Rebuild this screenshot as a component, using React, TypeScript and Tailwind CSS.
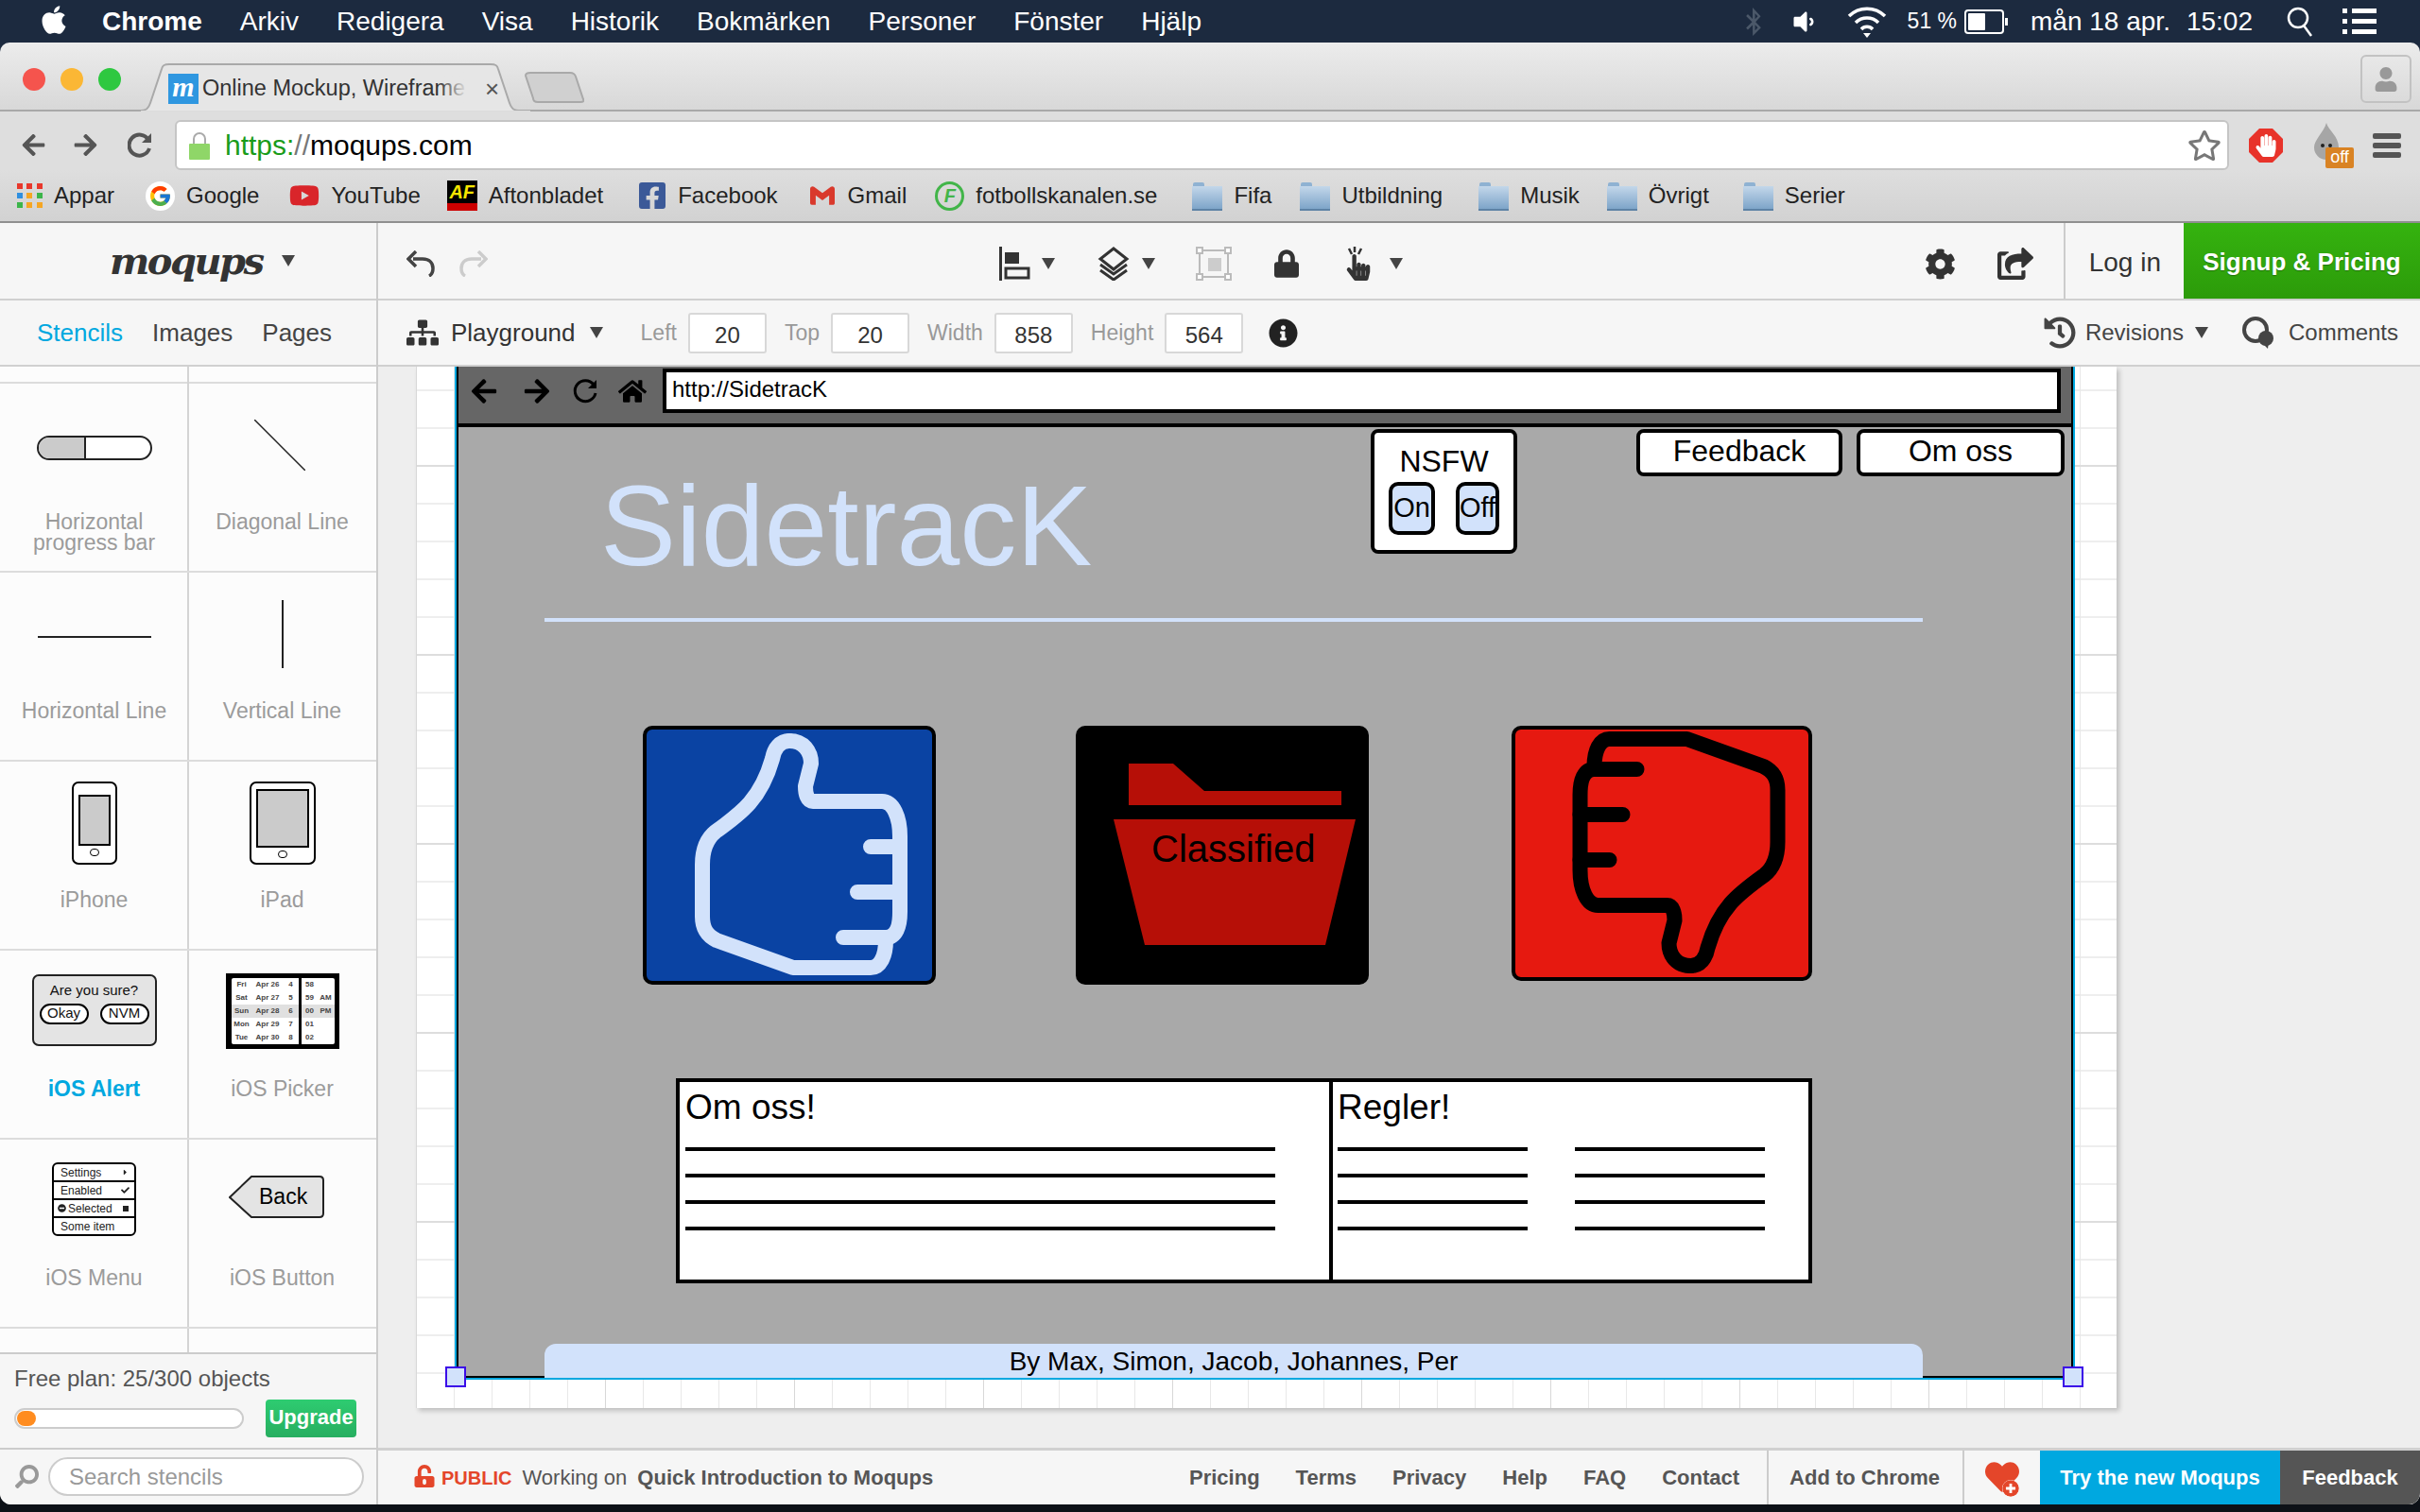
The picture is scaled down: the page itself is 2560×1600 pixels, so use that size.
import { FaApple, FaBluetoothB, FaCog, FaFacebookSquare, FaHeart, FaHistory, FaHome, FaInfoCircle, FaLock, FaRegStar, FaSearch, FaShareSquare, FaSitemap, FaYoutube, FaArrowLeft, FaArrowRight, FaUnlockAlt, FaHandPaper, FaHandPointer, FaUser, FaPlusCircle, FaVolumeDown, FaCheck, FaCaretRight, FaMinusCircle } from "react-icons/fa"
import { FcGoogle } from "react-icons/fc"
import { SiGmail } from "react-icons/si"

const menuItems = ["Arkiv", "Redigera", "Visa", "Historik", "Bokmärken", "Personer", "Fönster", "Hjälp"]
const footerLinks = ["Pricing", "Terms", "Privacy", "Help", "FAQ", "Contact"]
const pickerRows = [
    ["Fri", "Apr 26", "4", "58", ""],
    ["Sat", "Apr 27", "5", "59", "AM"],
    ["Sun", "Apr 28", "6", "00", "PM"],
    ["Mon", "Apr 29", "7", "01", ""],
    ["Tue", "Apr 30", "8", "02", ""],
]

function Caret({ className = "" }: { className?: string }) {
    return (
        <svg viewBox="0 0 14 12" className={`w-[14px] h-[12px] shrink-0 ${className}`}>
            <path d="M0 0h14L7 12z" fill="#444" />
        </svg>
    )
}

function MenuBar() {
    return (
        <div className="h-[45px] shrink-0 bg-[#1c2a3f] flex items-center text-white text-[28px] pl-[42px] pr-[46px]">
            <FaApple className="w-[30px] h-[34px] mb-1" />
            <span className="font-bold ml-[36px]">Chrome</span>
            <div className="flex gap-[40px] ml-[40px]">
                {menuItems.map((item) => <span key={item}>{item}</span>)}
            </div>
            <div className="flex-1" />
            <FaBluetoothB className="w-[20px] h-[30px] text-[#4b5869]" />
            <FaVolumeDown className="w-[26px] h-[28px] ml-[30px]" />
            <svg viewBox="0 0 42 36" className="w-[42px] h-[36px] ml-[33px]" fill="none" stroke="white" strokeWidth="3.5">
                <path d="M2 12a27 27 0 0 1 38 0" />
                <path d="M9 19a17 17 0 0 1 24 0" />
                <path d="M15 26a8 8 0 0 1 12 0" />
                <path d="M21 35l-4-5h8z" fill="white" stroke="none" />
            </svg>
            <span className="text-[23px] ml-[22px]">51 %</span>
            <div className="w-[42px] h-[26px] border-2 border-white rounded-[4px] ml-[8px] p-[2px]">
                <div className="w-[18px] h-full bg-white rounded-[1px]" />
            </div>
            <div className="w-[3px] h-[8px] bg-white mr-[24px] ml-[1px]" />
            <span>mån 18 apr.</span>
            <span className="ml-[17px]">15:02</span>
            <svg viewBox="0 0 28 32" className="w-[28px] h-[32px] ml-[36px]" fill="none" stroke="white" strokeWidth="2.5">
                <circle cx="12" cy="12" r="10" />
                <path d="M18 20l8 11" />
            </svg>
            <div className="ml-[31px] w-[36px] flex flex-col gap-[6px]">
                {[0, 1, 2].map((i) => (
                    <div key={i} className="flex gap-[5px]">
                        <div className="w-[5px] h-[5px] bg-white" />
                        <div className="flex-1 h-[5px] bg-white" />
                    </div>
                ))}
            </div>
        </div>
    )
}

function TabStrip() {
    return (
        <div className="h-[73px] shrink-0 rounded-t-[10px] bg-gradient-to-b from-[#ececec] to-[#d8d8d8] border-b-2 border-[#a9a9a9] flex items-end">
            <div className="flex gap-[16px] ml-[24px] mb-[20px]">
                <div className="w-[24px] h-[24px] rounded-full bg-[#f5544d]" />
                <div className="w-[24px] h-[24px] rounded-full bg-[#fbb735]" />
                <div className="w-[24px] h-[24px] rounded-full bg-[#2ec840]" />
            </div>
            <div className="relative ml-[19px] w-[416px] h-[51px] -mb-[2px] flex items-center pl-[31px] pt-[2px]">
                <svg viewBox="0 0 416 51" className="absolute inset-0 w-full h-full">
                    <path d="M0 50c8 0 10-2 12-8l12-36c1-4 3-5 8-5h340c5 0 7 1 8 5l12 36c2 6 4 8 12 8" fill="#e6e6e6" stroke="#a9a9a9" strokeWidth="2" />
                    <path d="M2 50h412v1H2z" fill="#dcdcdc" />
                </svg>
                <div className="relative w-[32px] h-[32px] bg-[#2f97e0] text-white italic font-bold font-['Liberation_Serif',serif] text-[30px] leading-[28px] text-center">m</div>
                <div className="relative ml-[4px] w-[280px] whitespace-nowrap text-[23.5px] text-[#333]">
                    Online Mockup, Wireframe
                    <div className="absolute right-0 inset-y-0 w-[30px] bg-gradient-to-r from-transparent to-[#e6e6e6]" />
                </div>
                <span className="relative ml-[19px] text-[#555] text-[26px] leading-none">×</span>
            </div>
            <svg viewBox="0 0 63 33" className="w-[63px] h-[33px] -ml-[8px] mb-[7px]">
                <path d="M6 1h42c3 0 5 1 6 4l8 24c1 2 0 3-3 3H14c-3 0-5-1-5-4L1 4c0-2 2-3 5-3z" fill="#d0d0d0" stroke="#a9a9a9" strokeWidth="2" />
            </svg>
            <div className="flex-1" />
            <div className="w-[54px] h-[51px] mb-[7px] mr-[9px] border-2 border-[#c2c2c2] rounded-[6px] flex items-center justify-center">
                <FaUser className="w-[24px] h-[26px] text-[#999]" />
            </div>
        </div>
    )
}

function AddressRow() {
    return (
        <div className="h-[62px] shrink-0 bg-[#dedede] flex items-center pl-[20px] pr-[20px] pt-[9px]">
            <FaArrowLeft className="w-[31px] h-[27px] text-[#555]" />
            <FaArrowRight className="w-[31px] h-[27px] text-[#555] ml-[24px]" />
            <svg viewBox="0 0 26 28" className="w-[26px] h-[28px] ml-[29px]" fill="none" stroke="#555" strokeWidth="4">
                <path d="M22 8a11 11 0 1 0 1 9" />
                <path d="M25 1v10H15z" fill="#555" stroke="none" />
            </svg>
            <div className="ml-[24px] w-[2174px] h-[53px] bg-white border-2 border-[#c5c5c5] rounded-[6px] flex items-center pl-[13px] pr-[6px]">
                <svg viewBox="0 0 22 30" className="w-[22px] h-[30px]">
                    <path d="M5 14V8a6 6 0 0 1 12 0v6" fill="none" stroke="#aaa" strokeWidth="2" />
                    <rect x="0" y="13" width="22" height="17" rx="1" fill="#8fd668" />
                </svg>
                <span className="text-[30px] ml-[16px] text-[#1a9c1a]">https:</span>
                <span className="text-[30px] text-[#777]">//</span>
                <span className="text-[30px] text-black">moqups.com</span>
                <div className="flex-1" />
                <FaRegStar className="w-[36px] h-[34px] text-[#777]" />
            </div>
            <div className="relative w-[36px] h-[36px] ml-[21px]">
                <svg viewBox="0 0 36 36" className="w-[36px] h-[36px]">
                    <path d="M11 0h14l11 11v14L25 36H11L0 25V11z" fill="#e8332a" />
                </svg>
                <FaHandPaper className="absolute left-[7px] top-[6px] w-[22px] h-[24px] text-white" />
            </div>
            <div className="relative w-[44px] h-[48px] ml-[31px]">
                <svg viewBox="0 0 30 40" className="w-[30px] h-[40px]">
                    <path d="M15 0c2 8 13 14 13 26a13 13 0 0 1-26 0C2 18 12 10 15 0z" fill="#a6a6a6" />
                    <circle cx="11" cy="24" r="2" fill="#222" />
                    <circle cx="19" cy="24" r="2" fill="#222" />
                </svg>
                <div className="absolute right-0 bottom-0 w-[30px] h-[22px] bg-[#d98324] rounded-[2px] text-white text-[18px] leading-[20px] text-center">off</div>
            </div>
            <div className="ml-[20px] w-[30px] flex flex-col gap-[4px]">
                <div className="h-[6px] rounded-[2px] bg-[#555]" />
                <div className="h-[6px] rounded-[2px] bg-[#555]" />
                <div className="h-[6px] rounded-[2px] bg-[#555]" />
            </div>
        </div>
    )
}

function AppsIcon() {
    const colors = ["#e8382c", "#e8382c", "#e8382c", "#2f8fe0", "#f5a623", "#3cb54a", "#3cb54a", "#f5a623", "#f5a623"]
    return (
        <div className="grid grid-cols-3 gap-[4px] w-[27px]">
            {colors.map((c, i) => <div key={i} className="w-[6px] h-[6px]" style={{ backgroundColor: c }} />)}
        </div>
    )
}

function FolderIcon() {
    return (
        <div className="relative w-[32px] h-[30px] mt-[2px]">
            <div className="absolute top-0 left-[1px] w-[12px] h-[6px] bg-[#8fb2d2] rounded-t-[2px]" />
            <div className="absolute top-[4px] inset-x-0 bottom-0 bg-gradient-to-b from-[#c3d7ea] to-[#7ea5c9] border-b-2 border-[#5d82a5]" />
        </div>
    )
}

function Bookmark({ icon, label, gap = "ml-[33px]" }: { icon: React.ReactNode; label: string; gap?: string }) {
    return (
        <div className={`flex items-center gap-[12px] ${gap}`}>
            {icon}
            <span className="text-[24px] text-[#222] whitespace-nowrap">{label}</span>
        </div>
    )
}

function BookmarkBar() {
    return (
        <div className="h-[56px] shrink-0 bg-gradient-to-b from-[#dedede] to-[#d2d2d2] border-b-2 border-[#8f8f8f] flex items-center pl-[18px]">
            <Bookmark gap="" icon={<AppsIcon />} label="Appar" />
            <Bookmark icon={<div className="w-[31px] h-[31px] rounded-full bg-white flex items-center justify-center"><FcGoogle className="w-[25px] h-[25px]" /></div>} label="Google" />
            <Bookmark gap="ml-[32px]" icon={<FaYoutube className="w-[32px] h-[30px] text-[#d9252a]" />} label="YouTube" />
            <Bookmark gap="ml-[28px]" icon={
                <div className="w-[32px] h-[32px] flex flex-col">
                    <div className="h-[24px] bg-black text-[#f6e600] font-bold italic text-[20px] leading-[24px] text-center overflow-hidden">AF</div>
                    <div className="h-[8px] bg-[#cc0000]" />
                </div>
            } label="Aftonbladet" />
            <Bookmark gap="ml-[37px]" icon={<FaFacebookSquare className="w-[30px] h-[32px] text-[#3b5998]" />} label="Facebook" />
            <Bookmark gap="ml-[32px]" icon={<SiGmail className="w-[30px] h-[26px] text-[#d9392c]" />} label="Gmail" />
            <Bookmark gap="ml-[30px]" icon={
                <div className="w-[31px] h-[31px] rounded-full border-[3px] border-[#42b549] text-[#42b549] font-bold italic text-[20px] leading-[24px] text-center">F</div>
            } label="fotbollskanalen.se" />
            <Bookmark gap="ml-[37px]" icon={<FolderIcon />} label="Fifa" />
            <Bookmark gap="ml-[30px]" icon={<FolderIcon />} label="Utbildning" />
            <Bookmark gap="ml-[38px]" icon={<FolderIcon />} label="Musik" />
            <Bookmark gap="ml-[29px]" icon={<FolderIcon />} label="Övrigt" />
            <Bookmark gap="ml-[36px]" icon={<FolderIcon />} label="Serier" />
        </div>
    )
}

function Stencil({ icon, label, active = false }: { icon?: React.ReactNode; label?: string; active?: boolean }) {
    return (
        <div className="h-[200px] border-b-2 border-[#dcdcdc] flex flex-col items-center">
            <div className="h-[135px] w-full flex items-center justify-center">{icon}</div>
            <div className={`text-[23px] leading-[22px] text-center ${active ? "text-[#00a8e0] font-bold" : "text-[#9b9b9b]"}`}>{label}</div>
        </div>
    )
}

function Device({ w, h, screenH, top }: { w: string; h: string; screenH: string; top: string }) {
    return (
        <div className={`${w} ${h} border-2 border-black rounded-[7px] bg-white flex flex-col items-center ${top}`}>
            <div className={`${screenH} w-[calc(100%-10px)] border-2 border-black bg-[#cbcbcb]`} />
            <div className="w-[10px] h-[8px] mt-[3px] rounded-full border border-black" />
        </div>
    )
}

function Picker() {
    return (
        <div className="w-[120px] h-[80px] bg-black p-[5px] pl-[6px]">
            <div className="bg-white rounded-[2px] h-full flex flex-col text-[8px] leading-none text-[#444] font-bold whitespace-nowrap">
                {pickerRows.map((row, i) => (
                    <div key={row[0]} className={`flex-1 flex items-center ${i === 2 ? "bg-[#e0e0e0]" : ""}`}>
                        <span className="w-[22px] text-center">{row[0]}</span>
                        <span className="w-[33px] text-center">{row[1]}</span>
                        <span className="w-[16px] text-center">{row[2]}</span>
                        <span className="w-[3px] h-full bg-black" />
                        <span className="w-[18px] text-center">{row[3]}</span>
                        <span className="w-[16px] text-center">{row[4]}</span>
                    </div>
                ))}
            </div>
        </div>
    )
}

function StencilMenu() {
    return (
        <div className="w-[89px] h-[78px] border-2 border-black rounded-[6px] bg-white flex flex-col text-[12px] leading-none text-[#222]">
            <div className="flex-1 flex items-center pl-[7px] pr-[5px] justify-between border-b-2 border-black">Settings<FaCaretRight className="w-[9px] h-[9px]" /></div>
            <div className="flex-1 flex items-center pl-[7px] pr-[5px] justify-between border-b-2 border-black">Enabled<FaCheck className="w-[9px] h-[9px]" /></div>
            <div className="flex-1 flex items-center pl-[4px] pr-[6px] border-b-2 border-black gap-[2px]"><FaMinusCircle className="w-[9px] h-[9px]" />Selected<div className="ml-auto w-[6px] h-[6px] bg-[#222]" /></div>
            <div className="flex-1 flex items-center pl-[7px]">Some item</div>
        </div>
    )
}

function StencilPanel() {
    return (
        <div className="flex-1 min-h-0 overflow-hidden bg-[#fcfcfc] w-[398px] relative">
            <div className="absolute top-0 bottom-0 left-[198px] w-[2px] bg-[#d4d4d4]" />
            <div className="h-[18px] border-b-2 border-[#dcdcdc]" />
            <div className="grid grid-cols-2 relative">
                <Stencil label="Horizontal progress bar" icon={
                    <div className="w-[122px] h-[26px] border-2 border-[#222] rounded-full overflow-hidden bg-white flex">
                        <div className="w-[50px] bg-[#cbcbcb] border-r-2 border-[#222]" />
                    </div>
                } />
                <Stencil label="Diagonal Line" icon={
                    <svg viewBox="0 0 54 54" className="w-[54px] h-[54px] -mt-[6px] -ml-[6px]"><path d="M0 0l54 54" stroke="#222" strokeWidth="1.5" /></svg>
                } />
                <Stencil label="Horizontal Line" icon={<div className="w-[120px] h-[2px] bg-[#222]" />} />
                <Stencil label="Vertical Line" icon={<div className="w-[2px] h-[72px] bg-[#222] -mt-[6px]" />} />
                <Stencil label="iPhone" icon={<Device w="w-[48px]" h="h-[88px]" screenH="h-[54px]" top="pt-[12px] mt-[-6px]" />} />
                <Stencil label="iPad" icon={<Device w="w-[70px]" h="h-[88px]" screenH="h-[62px]" top="pt-[6px] mt-[-6px]" />} />
                <Stencil active label="iOS Alert" icon={
                    <div className="w-[132px] h-[76px] border-2 border-[#222] rounded-[7px] bg-[#e4e4e4] flex flex-col items-center pt-[5px] -mt-[10px] text-[#111]">
                        <span className="text-[15px] leading-[20px]">Are you sure?</span>
                        <div className="flex gap-[12px] mt-[4px] text-[15px] leading-none">
                            <span className="w-[52px] h-[22px] border-2 border-black rounded-full bg-white text-center">Okay</span>
                            <span className="w-[52px] h-[22px] border-2 border-black rounded-full bg-white text-center">NVM</span>
                        </div>
                    </div>
                } />
                <Stencil label="iOS Picker" icon={<div className="-mt-[8px]"><Picker /></div>} />
                <Stencil label="iOS Menu" icon={<div className="-mt-[9px]"><StencilMenu /></div>} />
                <Stencil label="iOS Button" icon={
                    <div className="relative w-[101px] h-[45px] flex items-center -mt-[14px] -ml-[12px]">
                        <svg viewBox="0 0 101 45" className="absolute inset-0 w-full h-full">
                            <path d="M24 1h72c3 0 4 1 4 4v35c0 3-1 4-4 4H24L1 23z" fill="#e4e4e4" stroke="#222" strokeWidth="2" />
                        </svg>
                        <span className="relative ml-[32px] text-[23px] text-black">Back</span>
                    </div>
                } />
            </div>
        </div>
    )
}

function Sidebar() {
    return (
        <div className="w-[400px] shrink-0 flex flex-col border-r-2 border-[#ccc] bg-[#f6f6f6]">
            <div className="h-[82px] shrink-0 border-b-[2px] border-[#d0d0d0] flex items-center pl-[116px]">
                <span className="font-['DejaVu_Serif',serif] font-bold italic text-[40px] leading-none tracking-[-2.5px] text-[#333] w-[166px]">moqups</span>
                <Caret className="ml-[16px]" />
            </div>
            <div className="h-[70px] shrink-0 border-b-[2px] border-[#d0d0d0] flex items-center pl-[39px] text-[26px] text-[#444] gap-[31px]">
                <span className="text-[#00a8e0]">Stencils</span>
                <span>Images</span>
                <span>Pages</span>
            </div>
            <StencilPanel />
            <div className="h-[103px] shrink-0 border-t-2 border-b-2 border-[#ccc] px-[15px] pt-[12px] bg-[#f6f6f6]">
                <div className="text-[24px] leading-[28px] text-[#555]">Free plan: 25/300 objects</div>
                <div className="flex items-center mt-[8px]">
                    <div className="w-[243px] h-[22px] border-2 border-[#ccc] rounded-full bg-white p-[1px]">
                        <div className="w-[20px] h-full rounded-full bg-[#ff8c1f]" />
                    </div>
                    <div className="ml-[23px] w-[96px] h-[40px] rounded-[4px] bg-gradient-to-b from-[#2ecc71] to-[#27ae60] text-white font-bold text-[22px] leading-[38px] text-center">Upgrade</div>
                </div>
            </div>
            <div className="h-[58px] shrink-0 flex items-center pl-[16px] pb-[2px]">
                <FaSearch className="w-[25px] h-[25px] text-[#999] -scale-x-100" />
                <div className="ml-[10px] w-[334px] h-[41px] border-2 border-[#ccc] rounded-full bg-white text-[24px] leading-[37px] text-[#999] pl-[20px]">Search stencils</div>
            </div>
        </div>
    )
}

function PropInput({ label, value, w = "w-[83px]" }: { label: string; value: string; w?: string }) {
    return (
        <div className="flex items-center gap-[12px] ml-[19px]">
            <span className="text-[23px] text-[#999]">{label}</span>
            <div className={`${w} h-[43px] bg-white border-2 border-[#d8d8d8] rounded-[3px] text-[24px] leading-[39px] pt-[2px] text-center text-[#333]`}>{value}</div>
        </div>
    )
}

function TopToolbar() {
    return (
        <div className="h-[82px] shrink-0 border-b-[2px] border-[#d0d0d0] flex items-center pl-[30px]">
            <div className="flex items-center h-full pt-[6px]">
                <svg viewBox="0 0 32 28" className="w-[32px] h-[28px]" fill="none" stroke="#444" strokeWidth="3.5">
                    <path d="M7 9h10c8 0 11 5 11 10s-2 7-4 8" />
                    <path d="M10 1L2 9l8 8" />
                </svg>
                <svg viewBox="0 0 32 28" className="w-[32px] h-[28px] ml-[22px] -scale-x-100" fill="none" stroke="#ccc" strokeWidth="3.5">
                    <path d="M7 9h10c8 0 11 5 11 10s-2 7-4 8" />
                    <path d="M10 1L2 9l8 8" />
                </svg>
                <svg viewBox="0 0 34 36" className="w-[34px] h-[36px] ml-[540px]">
                    <path d="M1 0h3v36H1z" fill="#333" />
                    <path d="M7 6h15v12H7z" fill="#333" />
                    <path d="M8 23h24v10H8z" fill="none" stroke="#333" strokeWidth="3" />
                </svg>
                <Caret className="ml-[12px]" />
                <svg viewBox="0 0 38 36" className="w-[38px] h-[36px] ml-[43px]" fill="none" stroke="#333" strokeWidth="3">
                    <path d="M19 2l14 11-14 11L5 13z" />
                    <path d="M5 19l14 10 14-10" />
                    <path d="M5 25l14 10 14-10" />
                </svg>
                <Caret className="ml-[11px]" />
                <svg viewBox="0 0 38 36" className="w-[38px] h-[36px] ml-[43px]" fill="#ddd" stroke="#bbb" strokeWidth="2">
                    <rect x="4" y="4" width="30" height="28" fill="none" />
                    <rect x="1" y="1" width="6" height="6" fill="white" />
                    <rect x="31" y="1" width="6" height="6" fill="white" />
                    <rect x="1" y="29" width="6" height="6" fill="white" />
                    <rect x="31" y="29" width="6" height="6" fill="white" />
                    <rect x="13" y="12" width="14" height="14" fill="#ccc" stroke="none" />
                </svg>
                <FaLock className="w-[26px] h-[32px] text-[#333] ml-[45px]" />
                <div className="relative ml-[50px] w-[28px] h-[36px]">
                    <FaHandPointer className="w-[26px] h-[28px] text-[#333] absolute bottom-0 left-0" />
                    <svg viewBox="0 0 28 10" className="absolute top-0 left-0 w-[28px] h-[10px]" stroke="#333" strokeWidth="2.5">
                        <path d="M3 2l3 6M9 0v6M16 2l-3 6" />
                    </svg>
                </div>
                <Caret className="ml-[18px]" />
            </div>
            <div className="flex-1" />
            <div className="flex items-center h-full pt-[6px]">
                <FaCog className="w-[33px] h-[33px] text-[#333]" />
                <FaShareSquare className="w-[38px] h-[34px] text-[#333] ml-[44px]" />
            </div>
            <div className="h-full w-[2px] bg-[#ccc] ml-[32px]" />
            <span className="text-[28px] text-[#333] ml-[25px] mt-[4px]">Log in</span>
            <div className="ml-[24px] w-[250px] h-full pt-[2px] bg-gradient-to-b from-[#35b30f] to-[#2c9b0a] text-white font-bold text-[26px] [text-shadow:0_1px_1px_rgba(0,0,0,0.3)] flex items-center justify-center">Signup &amp; Pricing</div>
        </div>
    )
}

function PropsBar() {
    return (
        <div className="h-[70px] shrink-0 border-b-[2px] border-[#d0d0d0] flex items-center pl-[30px] pr-[23px]">
            <FaSitemap className="w-[34px] h-[32px] text-[#333]" />
            <span className="text-[26px] text-[#333] ml-[13px]">Playground</span>
            <Caret className="ml-[15px]" />
            <div className="flex items-center ml-[21px]">
                <PropInput label="Left" value="20" />
                <PropInput label="Top" value="20" />
                <PropInput label="Width" value="858" />
                <PropInput label="Height" value="564" />
            </div>
            <FaInfoCircle className="w-[31px] h-[31px] text-[#222] ml-[27px]" />
            <div className="flex-1" />
            <FaHistory className="w-[34px] h-[34px] text-[#444]" />
            <span className="text-[24px] text-[#444] ml-[10px]">Revisions</span>
            <Caret className="ml-[12px]" />
            <svg viewBox="0 0 38 34" className="w-[38px] h-[34px] ml-[35px]" fill="none" stroke="#444" strokeWidth="4">
                <circle cx="15" cy="14" r="12" />
                <circle cx="26" cy="23" r="8" fill="#444" stroke="none" />
                <path d="M22 28l6 6 1-8z" fill="#444" stroke="none" />
            </svg>
            <span className="text-[24px] text-[#444] ml-[12px]">Comments</span>
        </div>
    )
}

function Thumb({ flip = false, color }: { flip?: boolean; color: string }) {
    return (
        <g fill="none" stroke={color} strokeWidth="16" strokeLinecap="round" strokeLinejoin="round" transform={flip ? "translate(2623.5 1806) rotate(180)" : undefined}>
            <path d="M835 784C825 784 819 792 817 803C805 845 785 860 757 880C747 888 743 900 743 915L743 970C743 983 748 990 758 995L839 1024L921 1024C931 1024 937 1012 937 995" />
            <path d="M892 992L937 992C948 992 952 980 952 965L952 885C952 865 945 848 933 848L860 848C854 848 852 840 852 832L858 808C858 795 850 784 835 784" />
            <path d="M921 896H952M907 944H952" />
        </g>
    )
}

function MockScreen() {
    return (
        <div className="w-[1714px] h-[1072px] border-x-2 border-b-2 border-[#00a8e0] relative">
            <div className="h-full border-x-2 border-b-2 border-black bg-[#a9a9a9] flex flex-col">
                <div className="h-[64px] shrink-0 bg-[#666] border-b-4 border-black flex items-start pt-[2px]">
                    <div className="h-[47px] w-[216px] flex items-center pl-[11px] text-black">
                        <FaArrowLeft className="w-[32px] h-[30px]" />
                        <FaArrowRight className="w-[32px] h-[30px] ml-[24px]" />
                        <svg viewBox="0 0 28 28" className="w-[28px] h-[28px] ml-[21px]" fill="none" stroke="black" strokeWidth="3">
                            <path d="M23 7a11 11 0 1 0 2 9" />
                            <path d="M26 2v9h-9z" fill="black" stroke="none" />
                        </svg>
                        <FaHome className="w-[30px] h-[30px] ml-[21px]" />
                    </div>
                    <div className="w-[1479px] h-[47px] bg-white border-4 border-black text-[24px] leading-[35px] pl-[6px] text-black">http://SidetracK</div>
                </div>
                <div className="h-[202px] shrink-0 flex items-start">
                    <div className="w-[815px] ml-[150px] mt-[44px] text-[120px] leading-none text-[#d2e2fb]">SidetracK</div>
                    <div className="w-[155px] h-[132px] mt-[2px] bg-white border-4 border-black rounded-[8px] flex flex-col items-center pt-[10px] text-black">
                        <div className="text-[32px] leading-[40px]">NSFW</div>
                        <div className="flex gap-[22px] mt-[2px]">
                            <div className="w-[49px] h-[56px] border-4 border-black rounded-[10px] bg-[#d2e2fb] text-[29px] leading-[46px] text-center">On</div>
                            <div className="w-[46px] h-[56px] border-4 border-black rounded-[10px] bg-[#d2e2fb] text-[29px] leading-[46px] text-center">Off</div>
                        </div>
                    </div>
                    <div className="w-[218px] h-[50px] mt-[2px] ml-[126px] bg-white border-4 border-black rounded-[8px] text-[32px] leading-[38px] text-center text-black">Feedback</div>
                    <div className="w-[220px] h-[50px] mt-[2px] ml-[15px] bg-white border-4 border-black rounded-[8px] text-[32px] leading-[38px] text-center text-black">Om oss</div>
                </div>
                <div className="h-[4px] w-[1458px] ml-[91px] shrink-0 bg-[#d2e2fb]" />
                <div className="flex items-start mt-[110px] ml-[195px] shrink-0">
                    <div className="w-[310px] h-[274px] bg-[#0a43a3] border-4 border-black rounded-[10px]">
                        <svg viewBox="684 772 302 266" className="w-full h-full"><Thumb color="#d2e2fb" /></svg>
                    </div>
                    <div className="relative w-[310px] h-[274px] ml-[148px] bg-black rounded-[10px]">
                        <svg viewBox="1138 768 310 274" className="w-full h-full">
                            <path d="M1194 808h47l33 29h145v15h-225zM1178 867h256l-32 133h-191z" fill="#b60f07" />
                        </svg>
                        <div className="absolute top-[107px] left-[80px] text-[40px] leading-[46px] text-black">Classified</div>
                    </div>
                    <div className="w-[318px] h-[270px] ml-[151px] bg-[#e61910] border-4 border-black rounded-[10px]">
                        <svg viewBox="1603 772 310 262" className="w-full h-full"><Thumb flip color="#000" /></svg>
                    </div>
                </div>
                <div className="w-[1202px] h-[217px] mt-[99px] ml-[230px] shrink-0 border-4 border-black bg-white flex text-black">
                    <div className="w-[691px] border-r-4 border-black pl-[6px]">
                        <div className="text-[37px] leading-[40px] mt-[7px]">Om oss!</div>
                        <div className="flex flex-col gap-[24px] mt-[22px] w-[624px]">
                            {[0, 1, 2, 3].map((i) => <div key={i} className="h-[4px] bg-black" />)}
                        </div>
                    </div>
                    <div className="flex-1 pl-[5px]">
                        <div className="text-[37px] leading-[40px] mt-[7px]">Regler!</div>
                        <div className="flex gap-[50px] mt-[22px]">
                            {[0, 1].map((col) => (
                                <div key={col} className="flex flex-col gap-[24px] w-[201px]">
                                    {[0, 1, 2, 3].map((i) => <div key={i} className="h-[4px] bg-black" />)}
                                </div>
                            ))}
                        </div>
                    </div>
                </div>
                <div className="w-[1458px] h-[36px] mt-[64px] ml-[91px] -mb-[2px] shrink-0 relative bg-[#d2e2fb] rounded-t-[12px] text-[28px] leading-[38px] text-center text-black">By Max, Simon, Jacob, Johannes, Per</div>
            </div>
            <div className="absolute -left-[12px] -bottom-[10px] w-[22px] h-[22px] border-2 border-[#3b0be8] bg-[#d2e2fb]" />
            <div className="absolute -right-[11px] -bottom-[10px] w-[22px] h-[22px] border-2 border-[#3b0be8] bg-[#d2e2fb]" />
        </div>
    )
}

function Canvas() {
    return (
        <div className="flex-1 min-h-0 overflow-hidden bg-[#eeeeee] pl-[40px]">
            <div className="w-[1799px] h-[1102px] pl-[41px] bg-white shadow-[3px_3px_5px_rgba(0,0,0,0.2)] bg-[linear-gradient(to_right,#d8d8d8_1px,transparent_1px),linear-gradient(to_bottom,#dddddd_2px,transparent_2px),linear-gradient(to_right,#e8e8e8_1px,transparent_1px),linear-gradient(to_bottom,#eeeeee_2px,transparent_2px)] [background-size:200px_200px,200px_200px,40px_40px,40px_40px] [background-position:0_104px,0_104px,0_24px,0_24px]">
                <MockScreen />
            </div>
        </div>
    )
}

function BottomBar() {
    return (
        <div className="h-[60px] shrink-0 border-t-[3px] border-[#d0d0d0] bg-[#f6f6f6] flex items-center pl-[38px] text-[#555]">
            <FaUnlockAlt className="w-[22px] h-[24px] text-[#e4462a] -mt-[4px]" />
            <span className="ml-[7px] text-[20px] font-bold text-[#e4462a]">PUBLIC</span>
            <span className="ml-[11px] text-[22px]">Working on</span>
            <span className="ml-[11px] text-[22px] font-bold">Quick Introduction to Moqups</span>
            <div className="flex-1" />
            <div className="flex gap-[38px] text-[22px] font-bold">
                {footerLinks.map((l) => <span key={l}>{l}</span>)}
            </div>
            <div className="w-[2px] h-full bg-[#ccc] ml-[29px]" />
            <span className="ml-[22px] text-[22px] font-bold">Add to Chrome</span>
            <div className="w-[2px] h-full bg-[#ccc] ml-[24px]" />
            <div className="relative w-[36px] h-[40px] ml-[22px]">
                <FaHeart className="w-[36px] h-[38px] text-[#e4462a]" />
                <FaPlusCircle className="absolute right-0 bottom-0 w-[18px] h-[18px] text-[#e4462a] bg-white rounded-full" />
            </div>
            <div className="ml-[22px] w-[254px] h-full bg-[#00a8e0] text-white font-bold text-[22px] flex items-center justify-center">Try the new Moqups</div>
            <div className="w-[148px] h-full bg-[#555] text-white font-bold text-[22px] flex items-center justify-center rounded-br-[10px]">Feedback</div>
        </div>
    )
}

export default function App() {
    return (
        <div className="w-[2560px] h-[1600px] overflow-hidden bg-[#0d1117] flex flex-col font-['Liberation_Sans',sans-serif]">
            <MenuBar />
            <div className="bg-[#1c2a3f]">
                <TabStrip />
            </div>
            <AddressRow />
            <BookmarkBar />
            <div className="flex-1 min-h-0 flex bg-[#f6f6f6] rounded-b-[12px] overflow-hidden">
                <Sidebar />
                <div className="flex-1 min-w-0 flex flex-col">
                    <TopToolbar />
                    <PropsBar />
                    <Canvas />
                    <BottomBar />
                </div>
            </div>
            <div className="h-[8px] shrink-0" />
        </div>
    )
}
